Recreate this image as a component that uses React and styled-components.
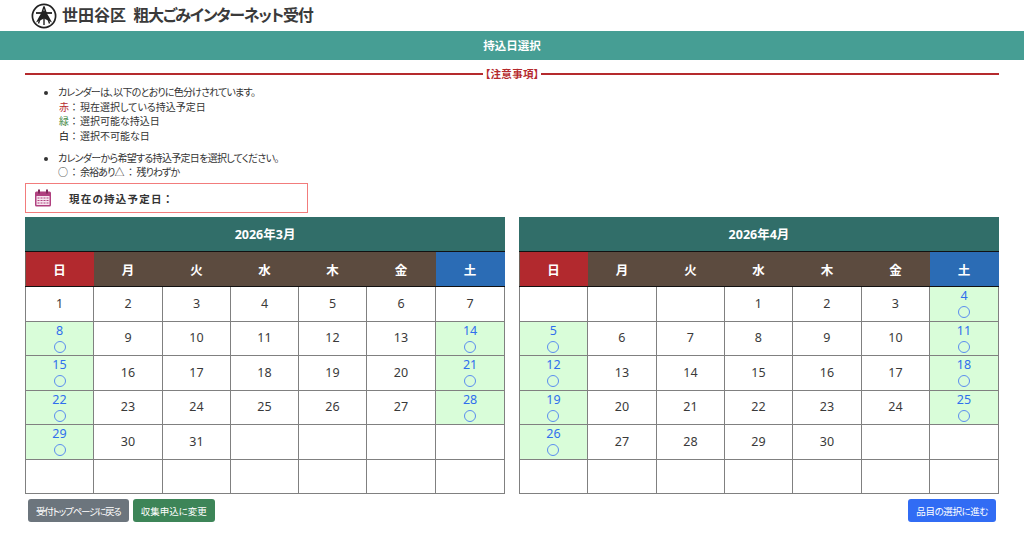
import React from "react";
import styled, { createGlobalStyle } from "styled-components";

const GlobalStyle = createGlobalStyle`
  html, body { margin: 0; padding: 0; background: #fff; }
  body {
    font-family: "Noto Sans", "Noto Sans CJK JP", sans-serif;
    color: #212529;
  }
`;

const Page = styled.div`
  width: 1024px;
  height: 533px;
  overflow: hidden;
`;

const Header = styled.header`
  height: 31px;
  padding-left: 31px;
  display: flex;
  align-items: center;
  gap: 5px;
`;

const SiteName = styled.div`
  font-size: 16px;
  line-height: 29px;
  font-weight: 700;
  color: #3a3a3a;
  font-feature-settings: "palt";
  word-spacing: 3px;
`;

const ServiceName = styled.span`
  letter-spacing: -1.25px;
`;

const TitleBar = styled.h1`
  margin: 0;
  height: 29px;
  background: #469e94;
  color: #fff;
  font-size: 11.5px;
  font-weight: 700;
  line-height: 29px;
  text-align: center;
`;

const Main = styled.main`
  padding: 0 25px;
`;

const Notice = styled.div`
  display: flex;
  align-items: center;
  gap: 2px;
  margin-top: 6px;
  height: 15px;
  font-size: 10.5px;
  font-weight: 700;
  letter-spacing: 0.3px;
  font-feature-settings: "palt";
  color: #b52a2d;
  &::before, &::after {
    content: "";
    height: 2px;
    background: #b52a2d;
  }
  &::before { width: 458px; }
  &::after { flex: 1; }
`;

const Notes = styled.ul`
  margin: 4px 0 0;
  padding-left: 33px;
  font-size: 10px;
  line-height: 14.6px;
  color: #333;
  font-feature-settings: "palt";
`;

const NoteItem = styled.li`
  margin-bottom: 7.5px;
  &:last-child { margin-bottom: 0; }
`;

const Line = styled.div`
  letter-spacing: ${(p) => p.$tight || 0}px;
`;

const Key = styled.span`
  color: ${(p) => p.$color};
  font-feature-settings: normal;
  padding-left: 1px;
`;

const Sep = styled.span`
  font-feature-settings: normal;
  letter-spacing: 1px;
`;

const CurrentDate = styled.div`
  display: flex;
  align-items: center;
  width: 283px;
  height: 30px;
  box-sizing: border-box;
  margin-top: 3px;
  padding-left: 8px;
  border: 1px solid #f27c7c;
  font-size: 10.5px;
  font-weight: 700;
  letter-spacing: 1.2px;
  color: #333;
`;

const CurrentLabel = styled.span`
  margin-left: 17px;
`;

const Calendars = styled.div`
  display: flex;
  justify-content: space-between;
  width: 974px;
  margin-top: 4px;
`;

const CalendarTable = styled.table`
  width: 480px;
  border-collapse: collapse;
  table-layout: fixed;
`;

const Col = styled.col`
  width: ${(p) => p.$w}px;
`;

const MonthCell = styled.th`
  height: 34px;
  padding: 0 0 3px;
  box-sizing: border-box;
  background: #316e69;
  color: #fff;
  font-size: 12.5px;
  font-weight: 700;
  border: 1px solid #316e69;
  border-bottom: 1px solid #111;
`;

const DayHead = styled.th`
  height: 34px;
  padding: 0;
  font-size: 12.5px;
  font-weight: 700;
  color: #fff;
  background: ${(p) => p.$bg};
  border: 1px solid ${(p) => p.$bg};
  border-left-color: #6e625a;
  border-bottom: 1px solid #111;
`;

const DayCell = styled.td`
  height: 33.5px;
  padding: 0;
  border: 1px solid #808080;
  background: ${(p) => (p.$open ? "#d9fdd9" : "#fff")};
  color: ${(p) => (p.$open ? "#2f6fed" : "#3a3a3a")};
  font-size: 12.5px;
  line-height: 14px;
  text-align: center;
  vertical-align: middle;
`;

const Mark = styled.span`
  display: block;
  width: 12px;
  height: 12px;
  margin: 3px auto 0;
  box-sizing: border-box;
  border: 1px solid #5b8def;
  border-radius: 50%;
`;

const Actions = styled.div`
  display: flex;
  gap: 4px;
  width: 968px;
  margin: 5px 0 0 3px;
`;

const Button = styled.button`
  height: 23px;
  padding: 0 8px;
  border: 0;
  border-radius: 3px;
  color: #fff;
  font-family: inherit;
  font-size: 9.5px;
  font-feature-settings: "palt";
  letter-spacing: ${(p) => p.$tight || 0}px;
  background: ${(p) => p.$bg};
  ${(p) => p.$push && "margin-left: auto;"}
`;

const DAYS = [
  ["日", "#b2292e"],
  ["月", "#5c4b3f"],
  ["火", "#5c4b3f"],
  ["水", "#5c4b3f"],
  ["木", "#5c4b3f"],
  ["金", "#5c4b3f"],
  ["土", "#2b6cb5"],
];

const MARCH = {
  title: "2026年3月",
  widths: [68, 69, 68, 68, 68, 69, 69],
  rows: [
    [1, 2, 3, 4, 5, 6, 7],
    ["8o", 9, 10, 11, 12, 13, "14o"],
    ["15o", 16, 17, 18, 19, 20, "21o"],
    ["22o", 23, 24, 25, 26, 27, "28o"],
    ["29o", 30, 31, "", "", "", ""],
    ["", "", "", "", "", "", ""],
  ],
};

const APRIL = {
  title: "2026年4月",
  widths: [68, 69, 68, 68, 69, 68, 69],
  rows: [
    ["", "", "", 1, 2, 3, "4o"],
    ["5o", 6, 7, 8, 9, 10, "11o"],
    ["12o", 13, 14, 15, 16, 17, "18o"],
    ["19o", 20, 21, 22, 23, 24, "25o"],
    ["26o", 27, 28, 29, 30, "", ""],
    ["", "", "", "", "", "", ""],
  ],
};

function Calendar({ data }) {
  return (
    <CalendarTable>
      <colgroup>
        {data.widths.map((w, i) => (
          <Col key={i} $w={w} />
        ))}
      </colgroup>
      <thead>
        <tr>
          <MonthCell colSpan={7}>{data.title}</MonthCell>
        </tr>
        <tr>
          {DAYS.map(([name, bg]) => (
            <DayHead key={name} $bg={bg}>{name}</DayHead>
          ))}
        </tr>
      </thead>
      <tbody>
        {data.rows.map((row, i) => (
          <tr key={i}>
            {row.map((v, j) => {
              const open = typeof v === "string" && v !== "";
              return (
                <DayCell key={j} $open={open}>
                  {open ? v.slice(0, -1) : v}
                  {open && <Mark />}
                </DayCell>
              );
            })}
          </tr>
        ))}
      </tbody>
    </CalendarTable>
  );
}

function WardLogo() {
  return (
    <svg width="26" height="26" viewBox="0 0 26 26">
      <circle cx="13" cy="13" r="11.6" fill="none" stroke="#222" strokeWidth="1.7" />
      <path d="M5 10h16" stroke="#222" strokeWidth="1.8" />
      <path d="M13 3.5 L7.5 20.5 M13 3.5 L18.5 20.5 M13 14v8" stroke="#222" strokeWidth="1.4" />
      <path d="M13 7 L17.5 13 L21 19.5 L13 15.5 L5 19.5 L8.5 13Z" fill="#222" />
    </svg>
  );
}

function CalendarIcon() {
  return (
    <svg width="18" height="18" viewBox="0 0 18 18">
      <rect x="1" y="2.5" width="16" height="15" rx="1.5" fill="#b0407f" />
      <rect x="2.5" y="7" width="13" height="9" fill="#f6e6ef" />
      <rect x="4" y="0.5" width="2" height="4" fill="#7f2a5b" />
      <rect x="12" y="0.5" width="2" height="4" fill="#7f2a5b" />
      <path d="M3.5 9h11M3.5 11.5h11M3.5 14h11" stroke="#b0407f" strokeWidth="1.2" strokeDasharray="2 1" />
    </svg>
  );
}

export default function App() {
  return (
    <Page>
      <GlobalStyle />
      <Header>
        <WardLogo />
        <SiteName>世田谷区 <ServiceName>粗大ごみインターネット受付</ServiceName></SiteName>
      </Header>
      <TitleBar>持込日選択</TitleBar>
      <Main>
        <Notice>【注意事項】</Notice>
        <Notes>
          <NoteItem>
            <Line $tight={-0.8}>カレンダーは、以下のとおりに色分けされています。</Line>
            <Line><Key $color="#b52a2d">赤</Key><Sep>：</Sep>現在選択している持込予定日</Line>
            <Line><Key $color="#3f8a3f">緑</Key><Sep>：</Sep>選択可能な持込日</Line>
            <Line><Key $color="#111">白</Key><Sep>：</Sep>選択不可能な日</Line>
          </NoteItem>
          <NoteItem>
            <Line $tight={-0.7}>カレンダーから希望する持込予定日を選択してください。</Line>
            <Line $tight={-0.9}><Sep>○：</Sep>余裕あり<Sep>△：</Sep>残りわずか</Line>
          </NoteItem>
        </Notes>
        <CurrentDate>
          <CalendarIcon />
          <CurrentLabel>現在の持込予定日：</CurrentLabel>
        </CurrentDate>
        <Calendars>
          <Calendar data={MARCH} />
          <Calendar data={APRIL} />
        </Calendars>
        <Actions>
          <Button $bg="#6c757d" $tight={-1.2}>受付トップページに戻る</Button>
          <Button $bg="#3d8558">収集申込に変更</Button>
          <Button $bg="#316cf4" $tight={-0.4} $push>品目の選択に進む</Button>
        </Actions>
      </Main>
    </Page>
  );
}
